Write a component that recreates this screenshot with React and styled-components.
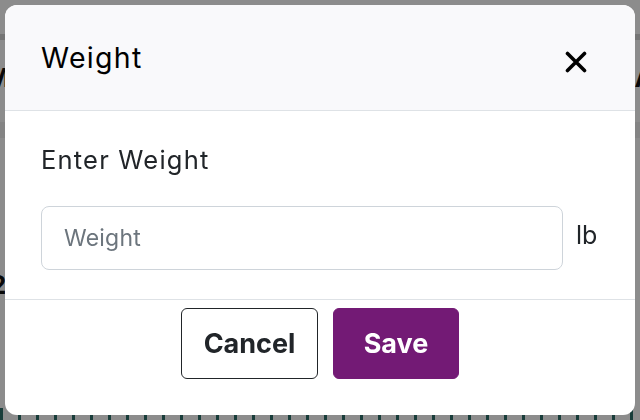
import React from 'react';
import styled, { createGlobalStyle } from 'styled-components';

const GlobalStyle = createGlobalStyle`
  html, body {
    margin: 0;
    padding: 0;
    background: #fff;
    font-family: Inter, "Liberation Sans", Arial, sans-serif;
  }
`;

const Page = styled.div`
  width: 640px;
  height: 420px;
  overflow: hidden;
  display: flex;
  flex-direction: column;
`;

const TopBar = styled.div`
  height: 34px;
  border-bottom: 6px solid #d6d6d6;
`;

const HeadRow = styled.div`
  display: flex;
  justify-content: space-between;
  padding: 22px 0 0;
  height: 60px;
  font-size: 26px;
  font-weight: 700;
  color: #111;
  margin-left: -14px;
  margin-right: -14px;
  border-bottom: 16px solid #f1f1f1;
`;

const BodyRow = styled.div`
  flex: 1;
  display: flex;
  align-items: flex-end;
  padding-bottom: 108px;
  font-size: 26px;
  font-weight: 700;
  color: #111;
  margin-left: -10px;
`;

const TealStrip = styled.div`
  height: 12px;
  background: repeating-linear-gradient(
    90deg,
    #2f6f6a 0 3px,
    transparent 3px 18px
  );
`;

const Overlay = styled.div`
  position: fixed;
  inset: 0;
  background: rgba(0, 0, 0, 0.45);
  display: flex;
  justify-content: center;
  align-items: flex-start;
`;

const Modal = styled.div`
  margin-top: 5px;
  width: 630px;
  height: 410px;
  background: #fff;
  border-radius: 12px;
  overflow: hidden;
  display: flex;
  flex-direction: column;
`;

const Header = styled.div`
  height: 105px;
  flex-shrink: 0;
  background: #f9f9fb;
  border-bottom: 1px solid #dee2e6;
  display: flex;
  align-items: center;
  justify-content: space-between;
  padding: 0 48px 0 36px;
`;

const Title = styled.h2`
  margin: 0;
  font-size: 28.5px;
  letter-spacing: 1.3px;
  font-weight: 400;
  color: #000;
`;

const CloseButton = styled.button`
  border: 0;
  background: none;
  padding: 0;
  margin-top: 8px;
  width: 22px;
  height: 22px;
  display: flex;
  align-items: center;
  justify-content: center;
  cursor: pointer;
`;

const Body = styled.div`
  height: 189px;
  flex-shrink: 0;
  border-bottom: 1px solid #dee2e6;
  padding: 32px 36px 0;
  box-sizing: border-box;
`;

const Label = styled.div`
  font-size: 25.5px;
  letter-spacing: 1.2px;
  line-height: 33px;
  color: #212529;
  margin-bottom: 30px;
`;

const InputRow = styled.div`
  display: flex;
  align-items: center;
  gap: 13px;
`;

const Input = styled.input`
  width: 522px;
  height: 64px;
  box-sizing: border-box;
  border: 1px solid #ced4da;
  border-radius: 8px;
  padding: 0 22px;
  font-family: Inter, "Liberation Sans", Arial, sans-serif;
  font-size: 23px;
  letter-spacing: 0.2px;
  color: #212529;
  outline: none;

  &::placeholder {
    color: #6c757d;
  }
`;

const Unit = styled.span`
  font-size: 25px;
  color: #212529;
  margin-top: -6px;
`;

const Footer = styled.div`
  flex: 1;
  display: flex;
  justify-content: center;
  align-items: flex-start;
  gap: 15px;
  padding-top: 8px;
`;

const Button = styled.button`
  height: 71px;
  box-sizing: border-box;
  border-radius: 6px;
  font-family: Inter, "Liberation Sans", Arial, sans-serif;
  font-size: 27px;
  font-weight: 700;
  cursor: pointer;
  padding: 0;
  width: ${(p) => p.$width}px;
  border: 1px solid ${(p) => (p.$primary ? '#731a75' : '#212529')};
  background: ${(p) => (p.$primary ? '#731a75' : '#fff')};
  color: ${(p) => (p.$primary ? '#fff' : '#212529')};
`;

export default function App() {
  return (
    <>
      <GlobalStyle />
      <Page>
        <TopBar />
        <HeadRow>
          <span>M</span>
          <span>A</span>
        </HeadRow>
        <BodyRow>2.</BodyRow>
        <TealStrip />
      </Page>
      <Overlay>
        <Modal role="dialog">
          <Header>
            <Title>Weight</Title>
            <CloseButton aria-label="Close">
              <svg width="22" height="22" viewBox="0 0 22 22">
                <path
                  d="M2.5 2.5 L19.5 19.5 M19.5 2.5 L2.5 19.5"
                  stroke="#000"
                  strokeWidth="3.6"
                  strokeLinecap="round"
                />
              </svg>
            </CloseButton>
          </Header>
          <Body>
            <Label>Enter Weight</Label>
            <InputRow>
              <Input placeholder="Weight" />
              <Unit>lb</Unit>
            </InputRow>
          </Body>
          <Footer>
            <Button $width={137}>Cancel</Button>
            <Button $width={126} $primary>Save</Button>
          </Footer>
        </Modal>
      </Overlay>
    </>
  );
}
